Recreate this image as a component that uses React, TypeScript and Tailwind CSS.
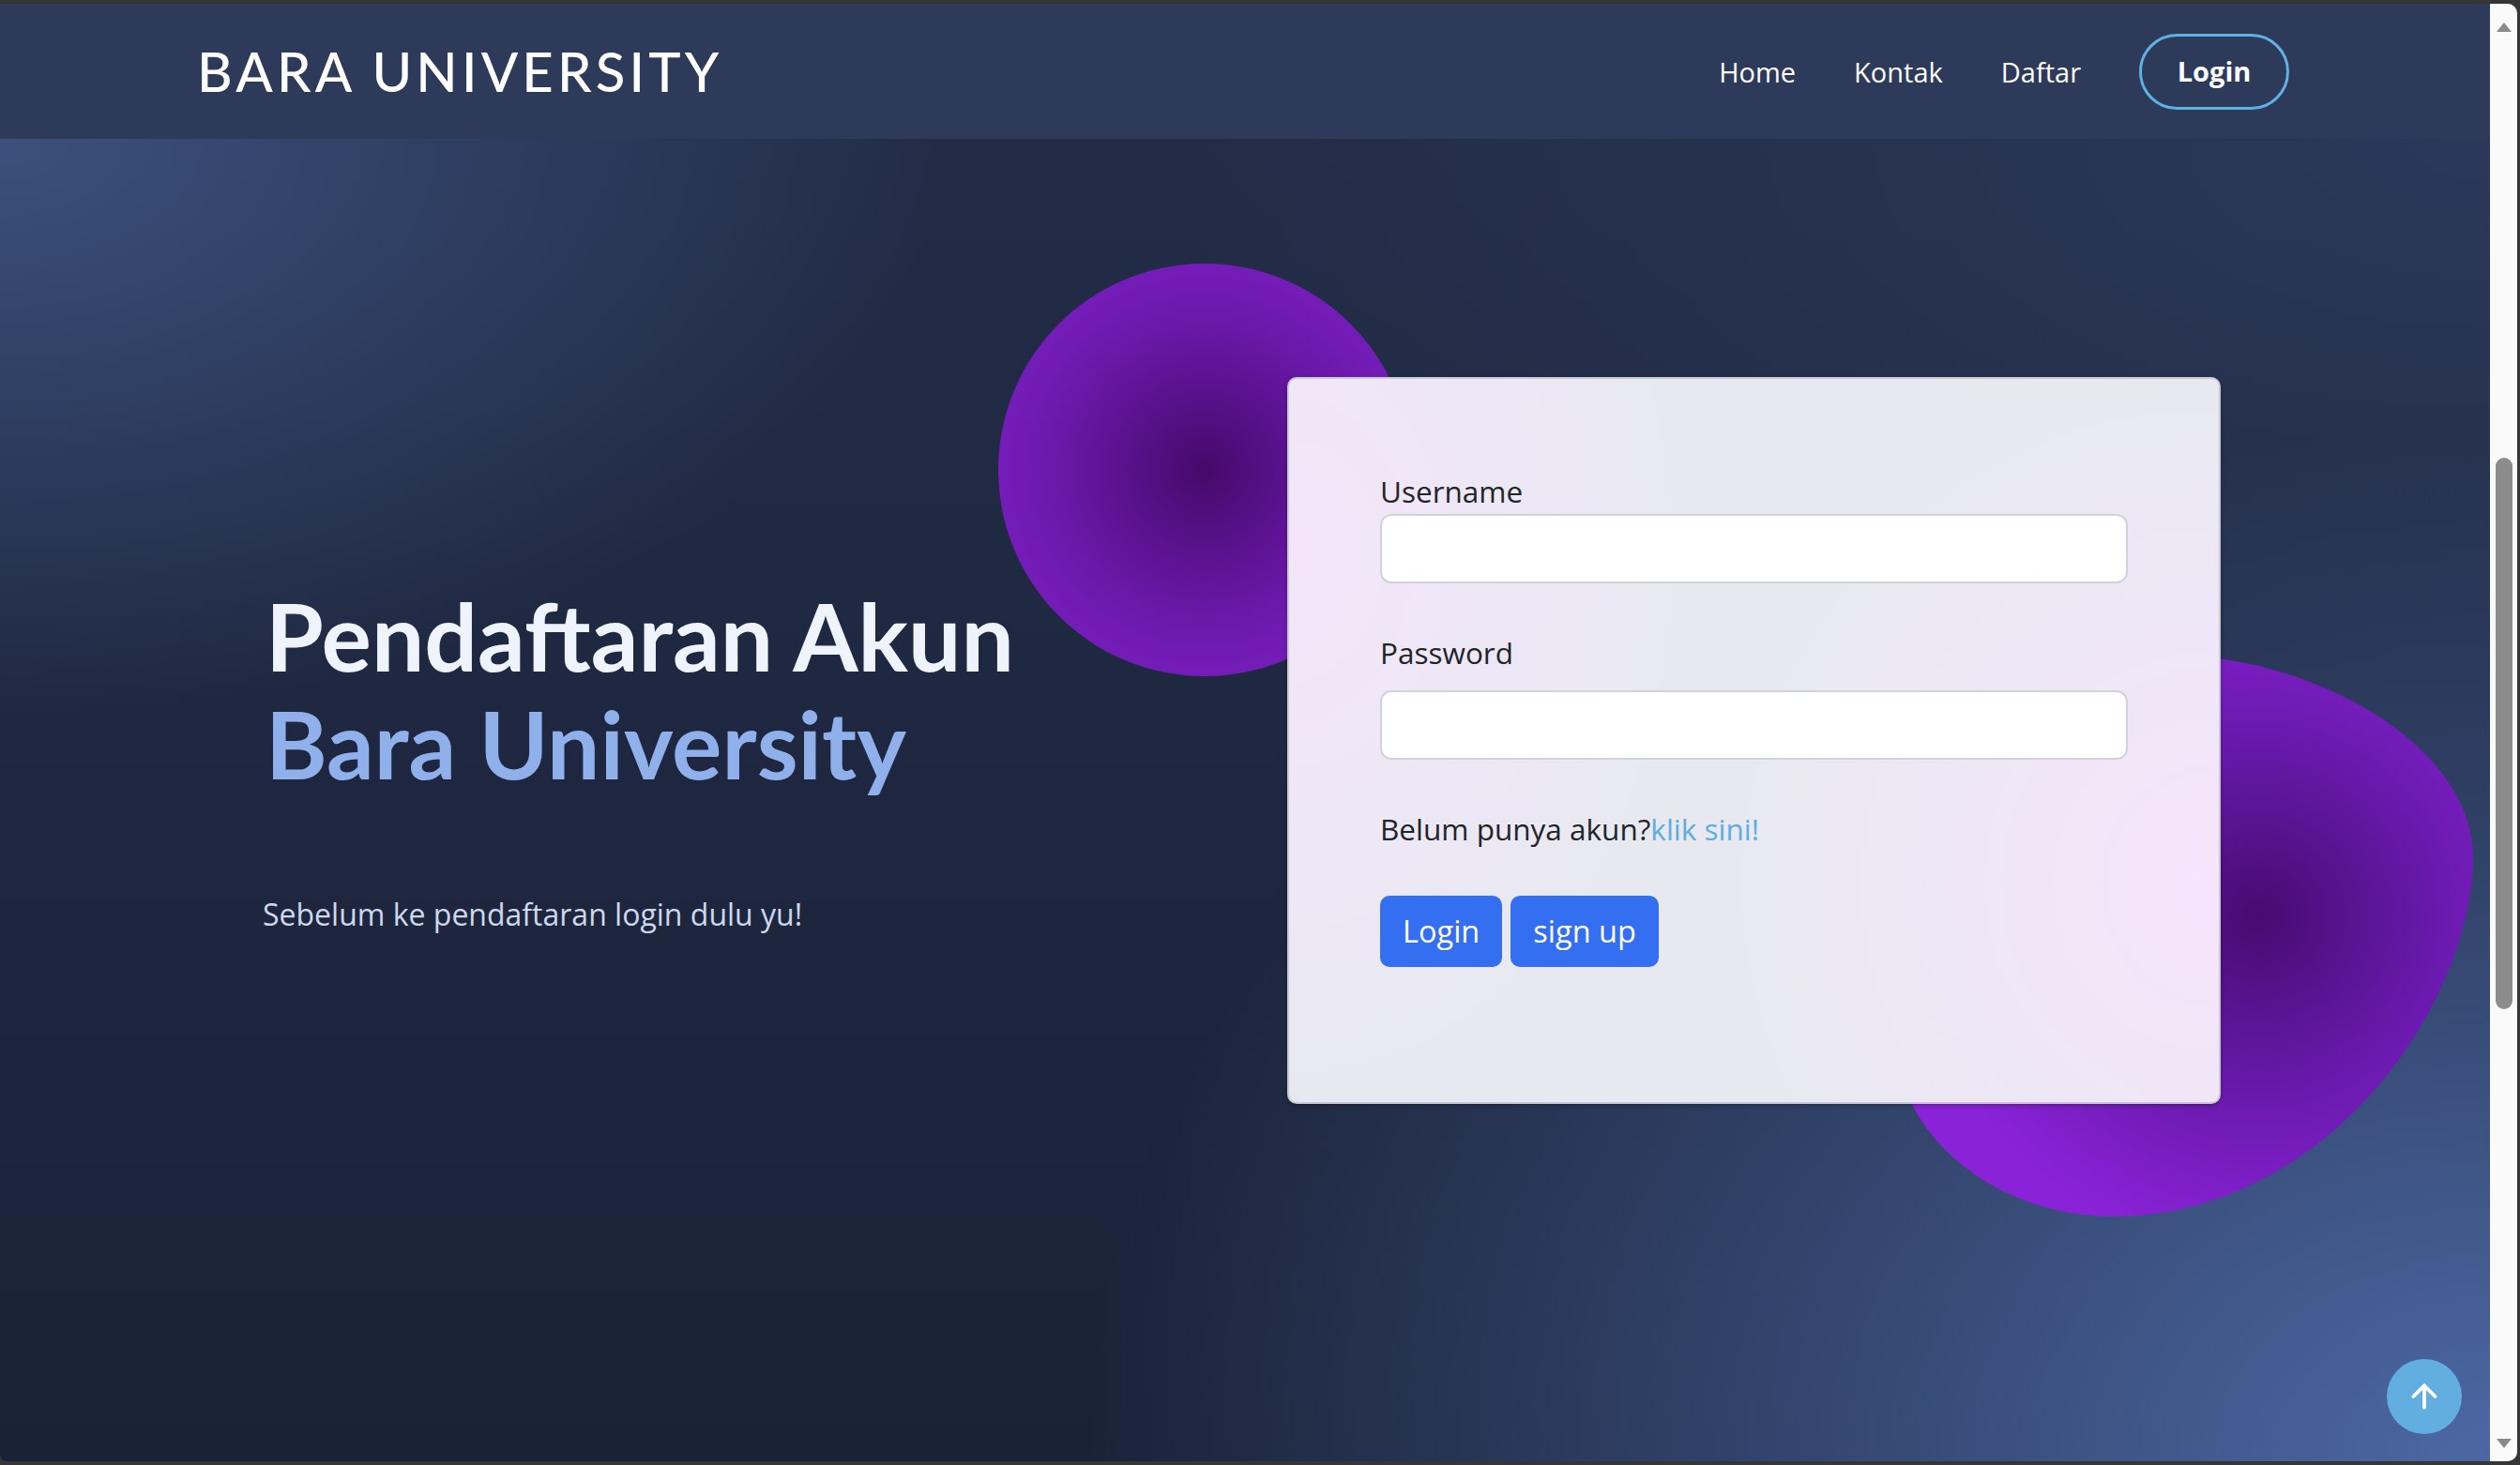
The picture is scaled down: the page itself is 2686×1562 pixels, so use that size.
import { ArrowUp } from 'lucide-react'

const navLinks = ['Home', 'Kontak', 'Daftar']

function Navbar() {
    return (
        <header className="h-[144px] shrink-0 bg-[#2d3a5a] flex items-center justify-between pl-[210px] pr-[214px] relative z-20">
            <div className="font-['Lato',sans-serif] text-[58px] leading-none tracking-[4.2px] text-white font-medium">
                BARA UNIVERSITY
            </div>
            <nav className="flex items-center gap-[62px] font-['Open_Sans',sans-serif] text-[29px] text-white">
                {navLinks.map((link) => (
                    <a key={link} href="#" className="leading-none">{link}</a>
                ))}
                <a href="#" className="w-[160px] h-[81px] rounded-full border-[3px] border-[#5fb0e3] flex items-center justify-center font-bold">
                    Login
                </a>
            </nav>
        </header>
    )
}

function LoginCard() {
    return (
        <div className="relative z-10 w-[995px] h-[775px] shrink-0 rounded-[10px] border-2 border-[#c9cad3] bg-[#e8e9f0] bg-[radial-gradient(ellipse_420px_560px_at_0%_25%,#f4e5fb_0%,transparent_100%),radial-gradient(ellipse_520px_520px_at_100%_70%,#f6e4fc_0%,transparent_100%)] shadow-[0_2px_4px_rgba(0,0,0,0.25)] px-[97px] pt-[97px] font-['Open_Sans',sans-serif] text-[#212529]">
            <label className="block text-[31.5px] leading-[45px]">Username</label>
            <input type="text" className="mt-[2px] block w-full h-[74px] rounded-[12px] border-2 border-[#ced4da] bg-white" />
            <label className="block mt-[51px] text-[31.5px] leading-[45px]">Password</label>
            <input type="password" className="mt-[18px] block w-full h-[74px] rounded-[12px] border-2 border-[#ced4da] bg-white" />
            <p className="mt-[51px] text-[31.5px] leading-[45px]">
                Belum punya akun?<a href="#" className="text-[#5dade2]">klik sini!</a>
            </p>
            <div className="mt-[49px] flex gap-[9px]">
                <button className="h-[76px] px-[24px] rounded-[10px] bg-[#346ff1] text-white text-[32.5px] leading-[48px]">Login</button>
                <button className="h-[76px] px-[24px] rounded-[10px] bg-[#346ff1] text-white text-[32.5px] leading-[48px]">sign up</button>
            </div>
        </div>
    )
}

function Blob() {
    return (
        <svg className="absolute left-[1900px] top-[500px]" width="760" height="700" viewBox="0 0 760 700">
            <defs>
                <radialGradient id="blobGrad" cx="507" cy="328" r="360" gradientUnits="userSpaceOnUse">
                    <stop offset="0" stopColor="#470b70" />
                    <stop offset="0.45" stopColor="#6318a4" />
                    <stop offset="1" stopColor="#8a22d8" />
                </radialGradient>
            </defs>
            <path
                d="M 464 54 C 600 72, 740 160, 736 272 C 730 430, 580 642, 362 649 C 250 652, 160 590, 130 512 C 90 380, 120 150, 300 70 C 360 46, 420 48, 464 54 Z"
                fill="url(#blobGrad)"
            />
        </svg>
    )
}

export default function App() {
    return (
        <div className="w-[2686px] h-[1562px] bg-[#363636] pt-[4px] pr-[3px] pb-[4px] flex overflow-hidden">
            <div className="flex-1 flex rounded-tr-[10px] rounded-br-[10px] rounded-bl-[8px] overflow-hidden">
                <main className="flex-1 relative flex flex-col overflow-hidden bg-[#1f2942]">
                    <Navbar />
                    <section className="flex-1 relative flex pl-[283px] pt-[254px] bg-[radial-gradient(ellipse_1000px_620px_at_0%_0%,#3b507c_0%,rgba(59,80,124,0)_100%),radial-gradient(ellipse_1500px_1100px_at_100%_100%,#4c68a4_0%,rgba(76,104,164,0)_100%),radial-gradient(ellipse_1400px_700px_at_100%_0%,#2b3859_0%,rgba(43,56,89,0)_100%),linear-gradient(180deg,#222c47_0%,#1a2237_100%)]">
                        <div className="absolute left-[1064px] top-[133px] w-[440px] h-[440px] rounded-full bg-[radial-gradient(circle,#450a6b_0%,#6a18a8_50%,#8422cf_100%)]" />
                        <Blob />

                        <div className="relative z-10 w-[1089px] shrink-0 pt-[218px]">
                            <h1 className="font-['Lato',sans-serif] font-bold text-[100px] leading-[115px] tracking-[0px]">
                                <span className="block text-[#eef3fc]">Pendaftaran Akun</span>
                                <span className="block text-[#90b0ec]">Bara University</span>
                            </h1>
                            <p className="mt-[102px] -ml-[3px] font-['Open_Sans',sans-serif] text-[32px] leading-[45px] text-[#cdd8ef]">
                                Sebelum ke pendaftaran login dulu yu!
                            </p>
                        </div>

                        <LoginCard />

                        <button className="absolute right-[30px] bottom-[29px] w-[80px] h-[80px] rounded-full bg-[#62aee0] flex items-center justify-center text-white z-20">
                            <ArrowUp size={40} strokeWidth={2.25} />
                        </button>
                    </section>
                </main>
                <div className="w-[29px] shrink-0 bg-[#fafafa] flex flex-col items-center">
                    <div className="mt-[20px] w-0 h-0 border-l-[8px] border-r-[8px] border-b-[10px] border-l-transparent border-r-transparent border-b-[#8a8a8a]" />
                    <div className="mt-[454px] w-[18px] h-[588px] rounded-full bg-[#8c8c8c]" />
                    <div className="mt-auto mb-[14px] w-0 h-0 border-l-[8px] border-r-[8px] border-t-[10px] border-l-transparent border-r-transparent border-t-[#8a8a8a]" />
                </div>
            </div>
        </div>
    )
}
